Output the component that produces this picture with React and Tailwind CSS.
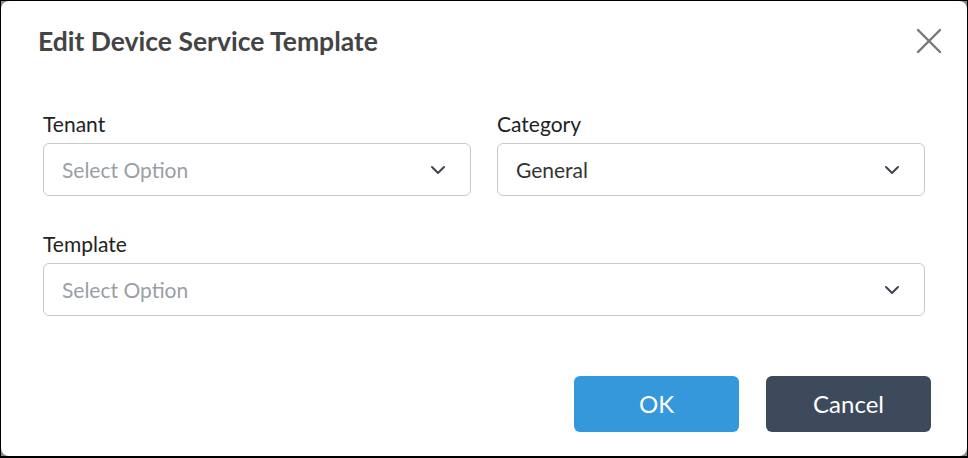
import React from 'react';

// Petit chevron des listes déroulantes
function Chevron() {
  return (
    <svg width="16" height="10" viewBox="0 0 16 10" fill="none">
      <path d="M2 2l6 6 6-6" stroke="#3f4652" strokeWidth="2" strokeLinecap="round" strokeLinejoin="round" />
    </svg>
  );
}

function SelectBox({ value, placeholder }) {
  return (
    <div className="flex h-[53px] items-center justify-between rounded-[6px] border border-[#c9c9c9] bg-white pl-[18px] pr-[24px]">
      <span className={value ? 'text-[21px] text-[#333]' : 'text-[21px] text-[#9aa0a6]'}>
        {value || placeholder}
      </span>
      <Chevron />
    </div>
  );
}

function Field({ label, children }) {
  return (
    <div className="flex flex-col">
      <label className="mb-[6px] text-[21px] leading-[26px] text-[#222]">{label}</label>
      {children}
    </div>
  );
}

export default function App() {
  return (
    <div
      className="h-[458px] w-[968px] border border-b-2 border-black bg-[#8a8a8a]"
      style={{ fontFamily: 'Lato, "Noto Sans", sans-serif' }}
    >
      <div className="flex h-full flex-col rounded-[8px] bg-white">
        {/* En-tête */}
        <div className="flex items-center justify-between pl-[37px] pr-[22px] pt-[24px]">
          <h1 className="text-[26.5px] font-bold leading-[32px] text-[#444]">Edit Device Service Template</h1>
          <button className="flex h-[32px] w-[32px] items-center justify-center">
            <svg width="26" height="26" viewBox="0 0 26 26">
              <path d="M2 2l22 22M24 2L2 24" stroke="#777" strokeWidth="2.4" strokeLinecap="round" />
            </svg>
          </button>
        </div>

        {/* Formulaire */}
        <div className="flex flex-col gap-[35px] px-[42px] pt-[54px]">
          <div className="grid grid-cols-2 gap-[26px]">
            <Field label="Tenant">
              <SelectBox placeholder="Select Option" />
            </Field>
            <Field label="Category">
              <SelectBox value="General" />
            </Field>
          </div>
          <Field label="Template">
            <SelectBox placeholder="Select Option" />
          </Field>
        </div>

        {/* Boutons */}
        <div className="flex justify-end gap-[27px] pr-[36px] pt-[60px]">
          <button className="h-[56px] w-[165px] rounded-[6px] bg-[#3498db] text-[24px] text-white">OK</button>
          <button className="h-[56px] w-[165px] rounded-[6px] bg-[#3d4a5c] text-[24px] text-white">Cancel</button>
        </div>
      </div>
    </div>
  );
}
